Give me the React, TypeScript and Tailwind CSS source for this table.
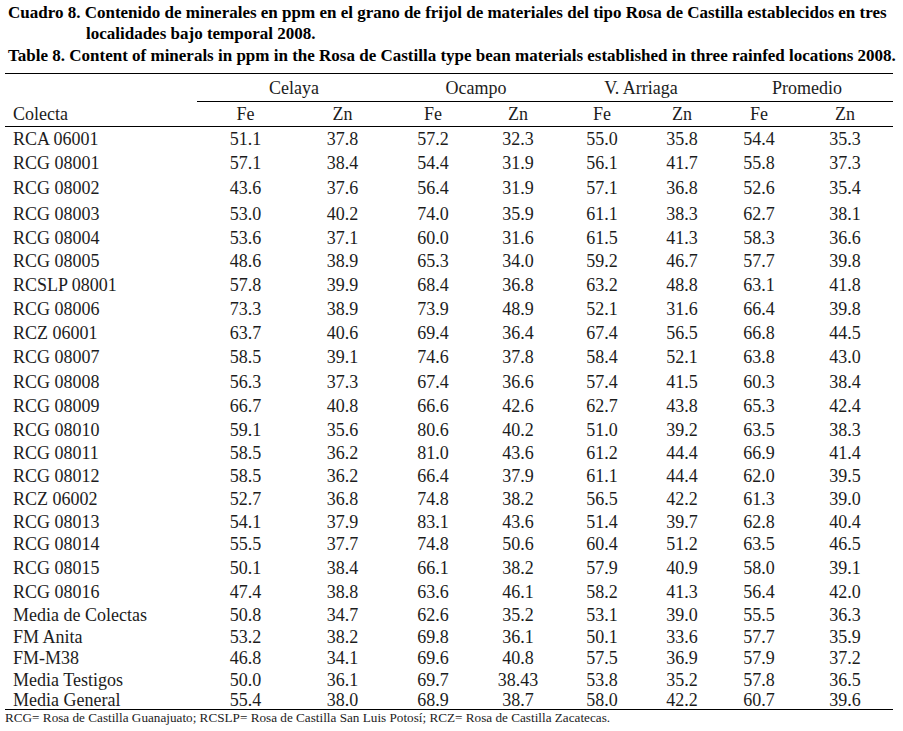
const groups = ['Celaya', 'Ocampo', 'V. Arriaga', 'Promedio']

// label, row height (px), Fe/Zn values per location
const rows: [string, number, string[]][] = [
  ['RCA 06001', 24, ['51.1', '37.8', '57.2', '32.3', '55.0', '35.8', '54.4', '35.3']],
  ['RCG 08001', 24, ['57.1', '38.4', '54.4', '31.9', '56.1', '41.7', '55.8', '37.3']],
  ['RCG 08002', 26, ['43.6', '37.6', '56.4', '31.9', '57.1', '36.8', '52.6', '35.4']],
  ['RCG 08003', 25, ['53.0', '40.2', '74.0', '35.9', '61.1', '38.3', '62.7', '38.1']],
  ['RCG 08004', 23, ['53.6', '37.1', '60.0', '31.6', '61.5', '41.3', '58.3', '36.6']],
  ['RCG 08005', 24, ['48.6', '38.9', '65.3', '34.0', '59.2', '46.7', '57.7', '39.8']],
  ['RCSLP 08001', 24, ['57.8', '39.9', '68.4', '36.8', '63.2', '48.8', '63.1', '41.8']],
  ['RCG 08006', 24, ['73.3', '38.9', '73.9', '48.9', '52.1', '31.6', '66.4', '39.8']],
  ['RCZ 06001', 23, ['63.7', '40.6', '69.4', '36.4', '67.4', '56.5', '66.8', '44.5']],
  ['RCG 08007', 25, ['58.5', '39.1', '74.6', '37.8', '58.4', '52.1', '63.8', '43.0']],
  ['RCG 08008', 25, ['56.3', '37.3', '67.4', '36.6', '57.4', '41.5', '60.3', '38.4']],
  ['RCG 08009', 24, ['66.7', '40.8', '66.6', '42.6', '62.7', '43.8', '65.3', '42.4']],
  ['RCG 08010', 23, ['59.1', '35.6', '80.6', '40.2', '51.0', '39.2', '63.5', '38.3']],
  ['RCG 08011', 23, ['58.5', '36.2', '81.0', '43.6', '61.2', '44.4', '66.9', '41.4']],
  ['RCG 08012', 23, ['58.5', '36.2', '66.4', '37.9', '61.1', '44.4', '62.0', '39.5']],
  ['RCZ 06002', 23, ['52.7', '36.8', '74.8', '38.2', '56.5', '42.2', '61.3', '39.0']],
  ['RCG 08013', 23, ['54.1', '37.9', '83.1', '43.6', '51.4', '39.7', '62.8', '40.4']],
  ['RCG 08014', 22, ['55.5', '37.7', '74.8', '50.6', '60.4', '51.2', '63.5', '46.5']],
  ['RCG 08015', 25, ['50.1', '38.4', '66.1', '38.2', '57.9', '40.9', '58.0', '39.1']],
  ['RCG 08016', 24, ['47.4', '38.8', '63.6', '46.1', '58.2', '41.3', '56.4', '42.0']],
  ['Media de Colectas', 22, ['50.8', '34.7', '62.6', '35.2', '53.1', '39.0', '55.5', '36.3']],
  ['FM Anita', 21, ['53.2', '38.2', '69.8', '36.1', '50.1', '33.6', '57.7', '35.9']],
  ['FM-M38', 22, ['46.8', '34.1', '69.6', '40.8', '57.5', '36.9', '57.9', '37.2']],
  ['Media Testigos', 22, ['50.0', '36.1', '69.7', '38.43', '53.8', '35.2', '57.8', '36.5']],
  ['Media General', 18, ['55.4', '38.0', '68.9', '38.7', '58.0', '42.2', '60.7', '39.6']],
]

const cols = 'grid grid-cols-[192px_97px_97px_84px_86px_82px_78px_76px_96px]'

export default function App() {
  return (
    <div
      className="w-[903px] h-[731px] bg-white overflow-hidden text-[#1c1c1c]"
      style={{ fontFamily: '"Liberation Serif", "Times New Roman", serif' }}
    >
      {/* caption */}
      <div className="pt-[2px] px-[8px] w-[893px] font-bold text-[17px] text-black">
        <div className="leading-[21px] whitespace-nowrap text-justify [text-align-last:justify]">
          Cuadro 8. Contenido de minerales en ppm en el grano de frijol de materiales del tipo Rosa de Castilla establecidos en tres
        </div>
        <div className="leading-[21px] pl-[78px]">localidades bajo temporal 2008.</div>
        <div className="leading-[23px] whitespace-nowrap text-justify [text-align-last:justify]">
          Table 8. Content of minerals in ppm in the Rosa de Castilla type bean materials established in three rainfed locations 2008.
        </div>
      </div>

      <div className="ml-[5px] w-[888px] mt-[6px] text-[18px] leading-none">
        <div className="border-t-[1.5px] border-black" />

        {/* location headers */}
        <div className={`${cols} h-[27px]`}>
          <div />
          {groups.map((g) => (
            <div key={g} className="col-span-2 flex items-center justify-center">
              {g}
            </div>
          ))}
        </div>
        <div className="ml-[192px] border-t border-black" />

        {/* element headers */}
        <div className={`${cols} h-[24px]`}>
          <div className="flex items-center pl-[8px]">Colecta</div>
          {groups.flatMap((g) =>
            ['Fe', 'Zn'].map((el) => (
              <div key={g + el} className="flex items-center justify-center">
                {el}
              </div>
            ))
          )}
        </div>
        <div className="border-t border-black" />

        {rows.map(([label, h, vals]) => (
          <div key={label} className={cols} style={{ height: h }}>
            <div className="flex items-center pl-[8px] whitespace-nowrap">{label}</div>
            {vals.map((v, i) => (
              <div key={i} className="flex items-center justify-center">
                {v}
              </div>
            ))}
          </div>
        ))}
        <div className="border-t border-black" />

        <div className="text-[13.2px] leading-[14px] pt-[1px] whitespace-nowrap">
          RCG= Rosa de Castilla Guanajuato; RCSLP= Rosa de Castilla San Luis Potosí; RCZ= Rosa de Castilla Zacatecas.
        </div>
      </div>
    </div>
  )
}
